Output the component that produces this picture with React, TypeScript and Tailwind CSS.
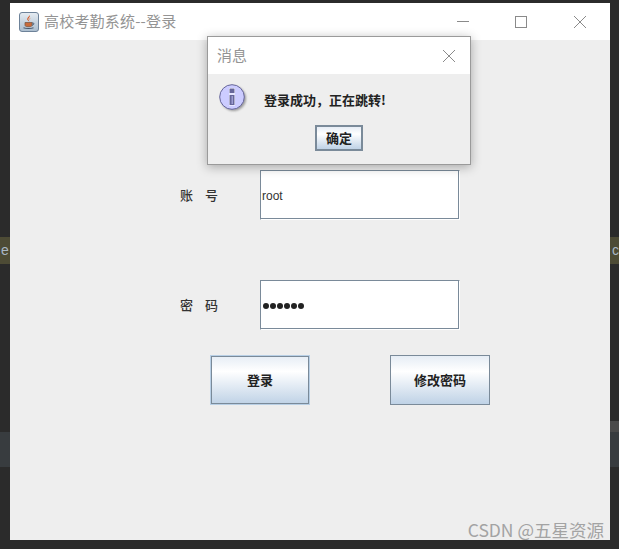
const cjk = { fontFamily: '"Noto Sans CJK SC", "Liberation Sans", sans-serif' };

function JavaIcon() {
  return (
    <svg width="20" height="20" viewBox="0 0 20 20" className="shrink-0">
      <defs>
        <linearGradient id="jg" x1="0" y1="0" x2="0" y2="1">
          <stop offset="0" stopColor="#e6ecf2" />
          <stop offset="1" stopColor="#a9bccd" />
        </linearGradient>
      </defs>
      <rect x="0.5" y="0.5" width="19" height="19" rx="2.5" fill="url(#jg)" stroke="#6d8299" />
      <path d="M10.5 3c1.5 2-2 3-1 5 .3.6.8 1 1 1.500-1.600-.8-3-2-2-3.600.6-1 2-1.500 2-2.900z" fill="#d8541e" />
      <path d="M12.500 5.500c-1.500.8-2 1.500-1.300 2.800-.4-.2-1-1-.7-1.700.3-.6 1.200-.9 2-1.100z" fill="#e07a3a" />
      <path d="M6 10.500h7v2.500c0 1.200-1 1.700-2 1.700H8c-1 0-2-.5-2-1.700z" fill="#c96a3a" stroke="#7a5a4a" strokeWidth="0.8" />
      <path d="M13 11h1.200c1 0 1 2-1.200 2.200" fill="none" stroke="#44566b" strokeWidth="1" />
      <path d="M4.500 15.700c2.500 1 7.500 1 10 0" fill="none" stroke="#44566b" strokeWidth="1.200" />
    </svg>
  );
}

function InfoIcon() {
  return (
    <svg width="30" height="30" viewBox="0 0 30 30" className="shrink-0">
      <defs>
        <filter id="is" x="-20%" y="-20%" width="150%" height="150%">
          <feGaussianBlur stdDeviation="1.200" />
        </filter>
      </defs>
      <circle cx="14.500" cy="14.500" r="12.500" fill="#555" opacity="0.55" filter="url(#is)" />
      <circle cx="13" cy="13" r="12.300" fill="#ccccff" stroke="#66669a" strokeWidth="1" />
      <rect x="10" y="4" width="6" height="5.500" fill="#fff" />
      <rect x="10.500" y="4.500" width="5" height="4.500" fill="#66669a" />
      <rect x="10" y="10.500" width="6" height="11" fill="#fff" />
      <rect x="10.500" y="11" width="5" height="10" fill="#66669a" />
      <rect x="12.500" y="12" width="1.500" height="8" fill="#9c9cd0" />
    </svg>
  );
}

function XIcon({ color = "#8a8a8a" }: { color?: string }) {
  return (
    <svg width="14" height="14" viewBox="0 0 14 14">
      <path d="M1 1l12 12M13 1L1 13" stroke={color} strokeWidth="1" fill="none" />
    </svg>
  );
}

const buttonGradient = "bg-[linear-gradient(180deg,#e6edf5_0%,#ffffff_32%,#bfd2e6_100%)]";

function Field({ label, children }: { label: [string, string]; children: React.ReactNode }) {
  return (
    <div className="flex h-[50px] items-center pl-[170px]">
      <div className="flex w-[80px] gap-[12px] pb-[1px] text-[13px] font-medium text-[#333]" style={cjk}>
        <span>{label[0]}</span>
        <span>{label[1]}</span>
      </div>
      <div className="flex h-[50px] w-[200px] items-center border border-t-[#7a8a99] border-r-white border-b-white border-l-[#7a8a99] bg-white pt-[2px] pl-[1px] shadow-[inset_-1px_-1px_0_#7a8a99]">
        {children}
      </div>
    </div>
  );
}

export default function App() {
  return (
    <div className="relative h-[549px] w-[619px] overflow-hidden bg-[#2b2b2b]">
      {/* IDE behind the window */}
      <div className="absolute top-[237px] left-0 h-[27px] w-full bg-[#4d4b35]">
        <span className="absolute top-[3px] left-[1px] text-[14px] text-[#a9b7c6]" style={{ fontFamily: '"Liberation Sans", sans-serif' }}>e</span>
        <span className="absolute top-[3px] left-[612px] text-[14px] text-[#a9b7c6]" style={{ fontFamily: '"Liberation Sans", sans-serif' }}>c</span>
      </div>
      <div className="absolute top-[432px] left-0 h-[35px] w-full bg-[#383c3f]" />
      <div className="absolute top-[421px] left-[610px] h-[11px] w-[9px] bg-[#4a4a4a]" />

      {/* Main window */}
      <div className="relative mt-[3px] ml-[10px] flex h-[537px] w-[600px] flex-col bg-[#eeeeee]">
        <div className="flex h-[37px] shrink-0 items-center bg-white pl-[9px]">
          <JavaIcon />
          <span className="ml-[5px] text-[15px] tracking-[0.2px] text-[#949494]" style={cjk}>
            高校考勤系统--登录
          </span>
          <div className="ml-auto flex items-center">
            <div className="h-px w-[12px] bg-[#8a8a8a]" />
            <div className="ml-[46px] h-[12px] w-[12px] border border-[#8a8a8a]" />
            <div className="mr-[23px] ml-[46px]">
              <XIcon />
            </div>
          </div>
        </div>

        <div className="flex flex-col gap-[60px] pt-[130px]">
          <Field label={["账", "号"]}>
            <span className="text-[12px] text-[#333]" style={{ fontFamily: '"Liberation Sans", sans-serif' }}>root</span>
          </Field>
          <Field label={["密", "码"]}>
            <span className="flex gap-[1.500px] pl-[1px]">
              {[0, 1, 2, 3, 4, 5].map((i) => (
                <span key={i} className="h-[5.500px] w-[5.500px] rounded-full bg-[#222]" />
              ))}
            </span>
          </Field>
        </div>

        <div className="mt-[25px] flex pl-[200px]">
          <button
            className={`flex h-[50px] w-[100px] items-center justify-center border border-[#b8cfe5] text-[13px] font-semibold text-[#222] shadow-[inset_0_0_0_1px_#7a8a99] ${buttonGradient}`}
            style={cjk}
          >
            登录
          </button>
          <button
            className={`ml-[80px] flex h-[50px] w-[100px] items-center justify-center border border-[#7a8a99] text-[13px] font-semibold text-[#222] ${buttonGradient}`}
            style={cjk}
          >
            修改密码
          </button>
        </div>

        <div className="absolute right-[6px] bottom-[-2px] text-[17.500px] leading-[24px] text-[#a3a3a3]" style={cjk}>
          CSDN @五星资源
        </div>
      </div>

      {/* Message dialog */}
      <div className="absolute top-[36px] left-[207px] flex h-[129px] w-[264px] flex-col border border-[#9a9a9a] bg-[#eeeeee] shadow-[0_2px_10px_rgba(0,0,0,0.3)]">
        <div className="flex h-[37px] shrink-0 items-center justify-between bg-white pr-[14px] pl-[9px]">
          <span className="text-[15px] text-[#949494]" style={cjk}>消息</span>
          <XIcon />
        </div>
        <div className="flex flex-col">
          <div className="flex h-[40px] items-start pt-[10px] pl-[11px]">
            <InfoIcon />
            <span className="mt-[6px] ml-[15px] text-[13px] font-semibold text-[#222]" style={cjk}>
              登录成功，正在跳转!
            </span>
          </div>
          <div className="mt-[11px] flex justify-center">
            <button
              className={`flex h-[26px] w-[48px] items-center justify-center border-2 border-[#7a8a99] text-[13px] font-semibold text-[#222] ${buttonGradient}`}
              style={cjk}
            >
              确定
            </button>
          </div>
        </div>
      </div>
    </div>
  );
}
